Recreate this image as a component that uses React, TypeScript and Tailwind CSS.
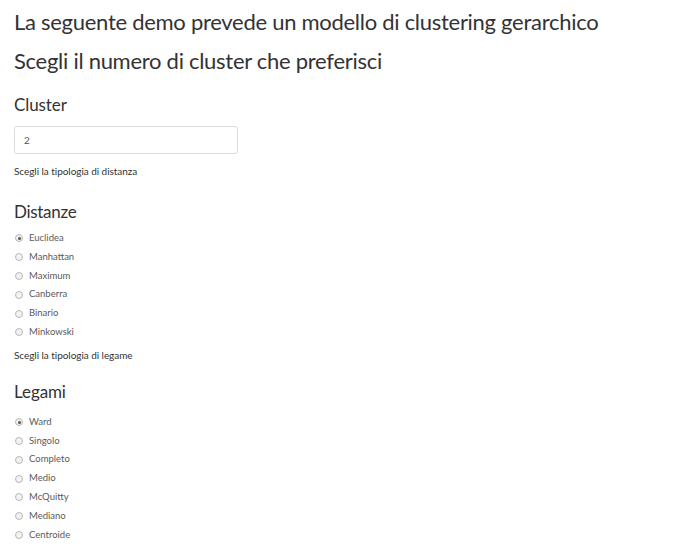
import React from "react";

function Radio({ label, checked }: { label: string; checked?: boolean }) {
  return (
    <div className="flex h-[18.8px] items-center">
      <div className="ml-[1px] flex h-[8px] w-[8px] items-center justify-center rounded-full border border-[#b8b8b8] bg-[#f3f3f3]">
        {checked && <div className="h-[3px] w-[3px] rounded-full bg-[#555]" />}
      </div>
      <span className="ml-[6px] text-[9.5px] leading-[18.8px] text-[#5a5a5a]">{label}</span>
    </div>
  );
}

export default function App() {
  const dist = ["Euclidea", "Manhattan", "Maximum", "Canberra", "Binario", "Minkowski"];
  const leg = ["Ward", "Singolo", "Completo", "Medio", "McQuitty", "Mediano", "Centroide"];
  return (
    <div
      className="min-h-[559px] w-full bg-white px-[14px] pt-[7px] text-[#333]"
      style={{ fontFamily: "Lato, 'Noto Sans', sans-serif" }}
    >
      <div className="h-[30px] text-[22px] leading-[30px] tracking-[-0.28px] whitespace-nowrap">
        La seguente demo prevede un modello di clustering gerarchico
      </div>
      <div className="mt-[9px] h-[30px] text-[22px] leading-[30px] tracking-[-0.28px] whitespace-nowrap">
        Scegli il numero di cluster che preferisci
      </div>
      <div className="mt-[17px] h-[24px] text-[17px] leading-[24px] tracking-[-0.1px]">Cluster</div>
      <div className="mt-[9px] flex h-[28px] w-[224px] items-center rounded-[3px] border border-[#dcdcdc] px-[9px] text-[10px] text-[#555]">
        2
      </div>
      <div className="mt-[9px] h-[16px] text-[10px] leading-[16px] tracking-[-0.05px]">Scegli la tipologia di distanza</div>
      <div className="mt-[21px] h-[24px] text-[17px] leading-[24px] tracking-[-0.3px]">Distanze</div>
      <div className="mt-[5px] flex flex-col">
        {dist.map((d, i) => (
          <Radio key={d} label={d} checked={i === 0} />
        ))}
      </div>
      <div className="mt-[5.2px] h-[16px] text-[10px] leading-[16px] tracking-[-0.05px]">Scegli la tipologia di legame</div>
      <div className="mt-[17.5px] h-[24px] text-[17px] leading-[24px] tracking-[-0.1px]">Legami</div>
      <div className="mt-[8.3px] flex flex-col">
        {leg.map((d, i) => (
          <Radio key={d} label={d} checked={i === 0} />
        ))}
      </div>
    </div>
  );
}
